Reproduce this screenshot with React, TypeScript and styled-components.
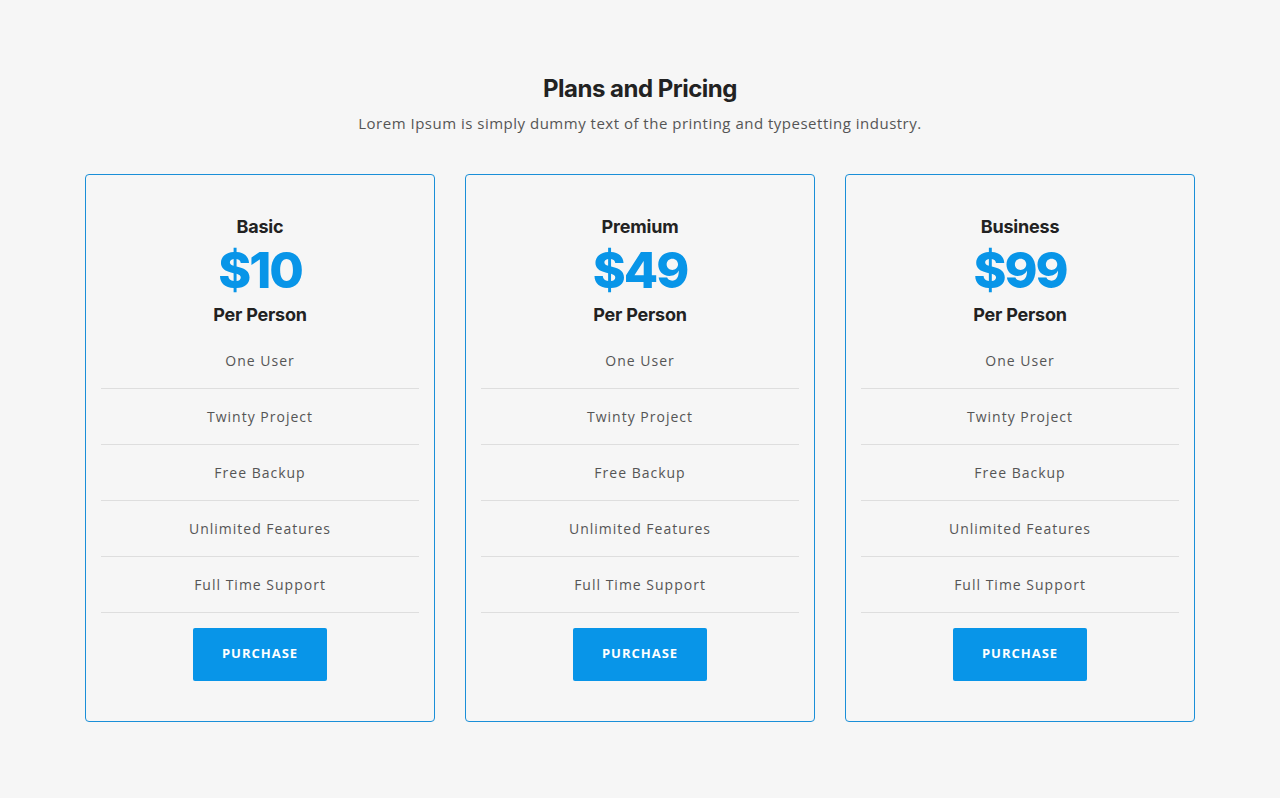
import React from "react";
import styled, { createGlobalStyle } from "styled-components";

const Global = createGlobalStyle`
  html, body { margin: 0; padding: 0; background: #f6f6f6; }
  body { font-family: "Open Sans", sans-serif; }
  * { box-sizing: border-box; }
`;

const Section = styled.section`
  padding: 74px 0 76px;
  background: #f6f6f6;
`;

const Container = styled.div`
  width: 1110px;
  margin: 0 auto;
`;

const Header = styled.header`
  text-align: center;
  margin-bottom: 39px;
`;

const Title = styled.h2`
  margin: 0;
  font-family: Inter, sans-serif;
  font-weight: 700;
  font-size: 24px;
  line-height: 30px;
  letter-spacing: -0.5px;
  color: #222;
`;

const Subtitle = styled.p`
  margin: 7px 0 0;
  font-family: "Open Sans", sans-serif;
  font-size: 15px;
  line-height: 24px;
  letter-spacing: 0.5px;
  color: #555;
`;

const Grid = styled.div`
  display: grid;
  grid-template-columns: repeat(3, 350px);
  gap: 30px;
`;

const Card = styled.div`
  border: 1px solid #1a8fd8;
  border-radius: 4px;
  padding: 40px 15px 40px;
  text-align: center;
  display: flex;
  flex-direction: column;
  align-items: center;
`;

const PlanName = styled.h3`
  margin: 0;
  font-family: Inter, sans-serif;
  font-weight: 700;
  font-size: 18px;
  line-height: 24px;
  letter-spacing: -0.2px;
  color: #222;
`;

const Price = styled.div`
  margin-top: 3px;
  font-family: Inter, sans-serif;
  font-weight: 800;
  font-size: 50px;
  line-height: 56px;
  letter-spacing: -2px;
  color: #0895e8;
`;

const Per = styled.div`
  margin-top: 5px;
  font-family: Inter, sans-serif;
  font-weight: 700;
  font-size: 18px;
  line-height: 24px;
  letter-spacing: -0.2px;
  color: #222;
`;

const List = styled.ul`
  list-style: none;
  margin: 6px 0 0;
  padding: 0;
  width: 100%;
`;

const Item = styled.li`
  height: 56px;
  display: flex;
  align-items: center;
  justify-content: center;
  border-bottom: 1px solid #dedede;
  font-size: 14px;
  letter-spacing: 1px;
  color: #555;
`;

const Button = styled.button`
  margin-top: 15px;
  width: 134px;
  height: 53px;
  padding: 0 0 3px;
  border: none;
  border-radius: 2px;
  background: #0895e8;
  color: #fff;
  font-family: "Open Sans", sans-serif;
  font-weight: 700;
  font-size: 13px;
  letter-spacing: 1px;
  cursor: pointer;
`;

const plans = [
  { name: "Basic", price: "$10" },
  { name: "Premium", price: "$49" },
  { name: "Business", price: "$99" },
];

const features = [
  "One User",
  "Twinty Project",
  "Free Backup",
  "Unlimited Features",
  "Full Time Support",
];

export default function App() {
  return (
    <>
      <Global />
      <Section>
        <Container>
          <Header>
            <Title>Plans and Pricing</Title>
            <Subtitle>
              Lorem Ipsum is simply dummy text of the printing and typesetting industry.
            </Subtitle>
          </Header>
          <Grid>
            {plans.map((p) => (
              <Card key={p.name}>
                <PlanName>{p.name}</PlanName>
                <Price>{p.price}</Price>
                <Per>Per Person</Per>
                <List>
                  {features.map((f) => (
                    <Item key={f}>{f}</Item>
                  ))}
                </List>
                <Button>PURCHASE</Button>
              </Card>
            ))}
          </Grid>
        </Container>
      </Section>
    </>
  );
}
